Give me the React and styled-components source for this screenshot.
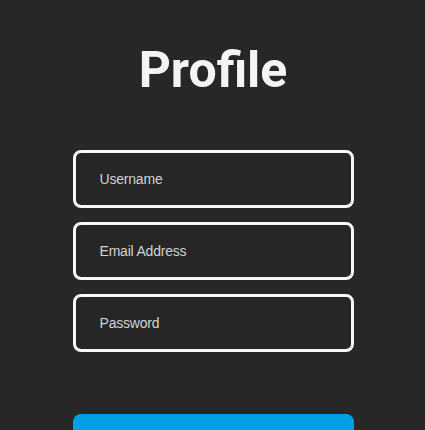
import React from "react";
import styled, { createGlobalStyle } from "styled-components";

const GlobalStyle = createGlobalStyle`
  html, body {
    margin: 0;
    padding: 0;
    background: #272727;
  }
`;

export default function App() {
  return (
    <>
      <GlobalStyle />
      <Page>
        <Title>Profile</Title>
        <Form>
          <Field placeholder="Username" />
          <Field placeholder="Email Address" />
          <Field placeholder="Password" type="password" />
          <SubmitButton type="button" aria-label="Save" />
        </Form>
      </Page>
    </>
  );
}

const Page = styled.div`
  width: 100%;
  min-height: 430px;
  background: #272727;
  display: flex;
  flex-direction: column;
  align-items: center;
  padding: 40px 0 0 1px;
  box-sizing: border-box;
`;

const Title = styled.h1`
  margin: 0;
  font-family: Roboto, "Noto Sans", sans-serif;
  font-weight: 700;
  font-size: 50px;
  line-height: 60px;
  color: #f4f4f4;
`;

const Form = styled.form`
  margin-top: 50px;
  width: 281px;
  display: flex;
  flex-direction: column;
  gap: 14px;
`;

const Field = styled.input`
  box-sizing: border-box;
  height: 58px;
  width: 100%;
  border: 3px solid #f7f7f7;
  border-radius: 8px;
  background: #262626;
  padding: 0 24px;
  font-family: "Liberation Sans", Arial, sans-serif;
  font-size: 14px;
  color: #e0e0e0;
  outline: none;

  &::placeholder {
    color: #d2d2d2;
    letter-spacing: -0.2px;
  }
`;

const SubmitButton = styled.button`
  margin-top: 48px;
  height: 58px;
  width: 100%;
  border: none;
  border-radius: 8px;
  background: #039fe6;
`;
